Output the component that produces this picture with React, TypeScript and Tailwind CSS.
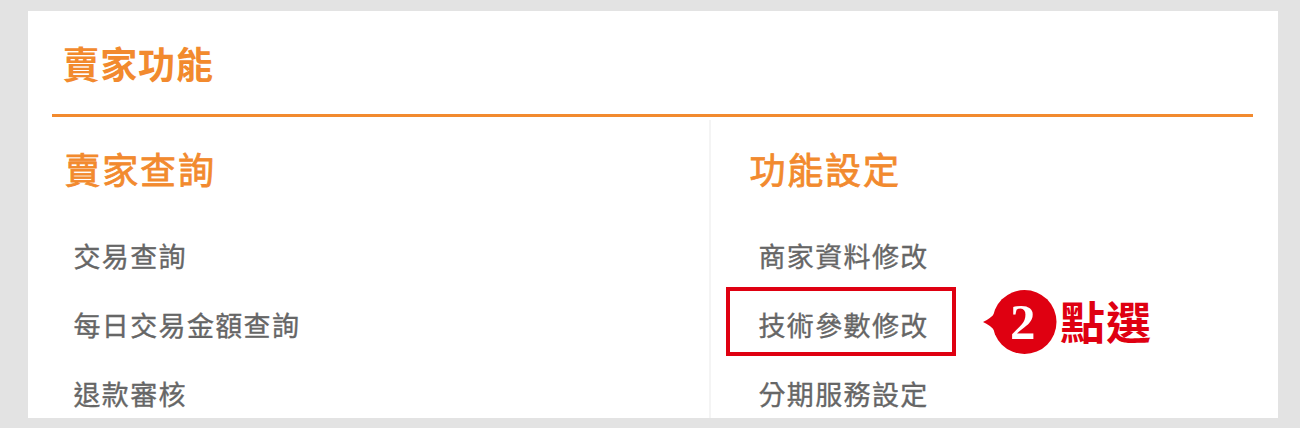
const groups = [
  { title: '賣家查詢', items: ['交易查詢', '每日交易金額查詢', '退款審核'] },
  { title: '功能設定', items: ['商家資料修改', '技術參數修改', '分期服務設定'] },
];

function Column({ title, items, selected }: { title: string; items: string[]; selected?: number }) {
  return (
    <section className="pt-[30px]">
      <h2 className="ml-[12.5px] h-[53px] text-[36px] leading-[42px] tracking-[1.8px] text-[#f28a2e] [-webkit-text-stroke:0.8px_#f28a2e]">{title}</h2>
      <ul className="mt-[22px]">
        {items.map((item, i) => (
          <li key={item} className="relative flex h-[69px] items-center pl-[21.5px] text-[27px] tracking-[1.35px] text-[#666666] [-webkit-text-stroke:0.35px_#666666]">
            {item}
            {i === selected && (
              <>
                <span className="absolute -top-[4px] -left-[11px] h-[69px] w-[230px] border-4 border-[#df0011]" />
                <div className="absolute -top-[2px] left-[246px] flex items-center gap-[2px] [-webkit-text-stroke:0]">
                  <svg width="75" height="66" viewBox="0 0 75 66" className="block">
                    <path d="M0 33Q7 30 12 24V42Q7 36 0 33Z" fill="#df0011" />
                    <circle cx="41.5" cy="33" r="32" fill="#df0011" />
                    <text x="40.5" y="50" textAnchor="middle" fontFamily="Liberation Serif" fontWeight="700" fontSize="51" fill="white">2</text>
                  </svg>
                  <span className="-mt-[3px] text-[45px] leading-[66px] font-bold tracking-[1px] whitespace-nowrap text-[#df0011]">點選</span>
                </div>
              </>
            )}
          </li>
        ))}
      </ul>
    </section>
  );
}

export default function App() {
  return (
    <div className="h-[428px] w-[1300px] overflow-hidden bg-[#e3e3e3] pt-[11px] pl-7 font-['Noto_Sans_CJK_TC',sans-serif]">
      <main className="h-[407px] w-[1250px] overflow-hidden bg-white pr-[25px] pl-6">
        <header className="flex h-[106px] items-center border-b-[3px] border-[#f28a2e] pt-[2px] pl-[10.5px]">
          <h1 className="text-[37px] font-bold tracking-[0.8px] text-[#f28a2e]">賣家功能</h1>
        </header>
        <div className="grid h-[301px] grid-cols-[657px_1fr]">
          <Column {...groups[0]} />
          <div className="mt-[3px] border-l-2 border-[#f4f4f4] pl-[26px]">
            <div className="-mt-[3px]">
              <Column {...groups[1]} selected={1} />
            </div>
          </div>
        </div>
      </main>
    </div>
  );
}
